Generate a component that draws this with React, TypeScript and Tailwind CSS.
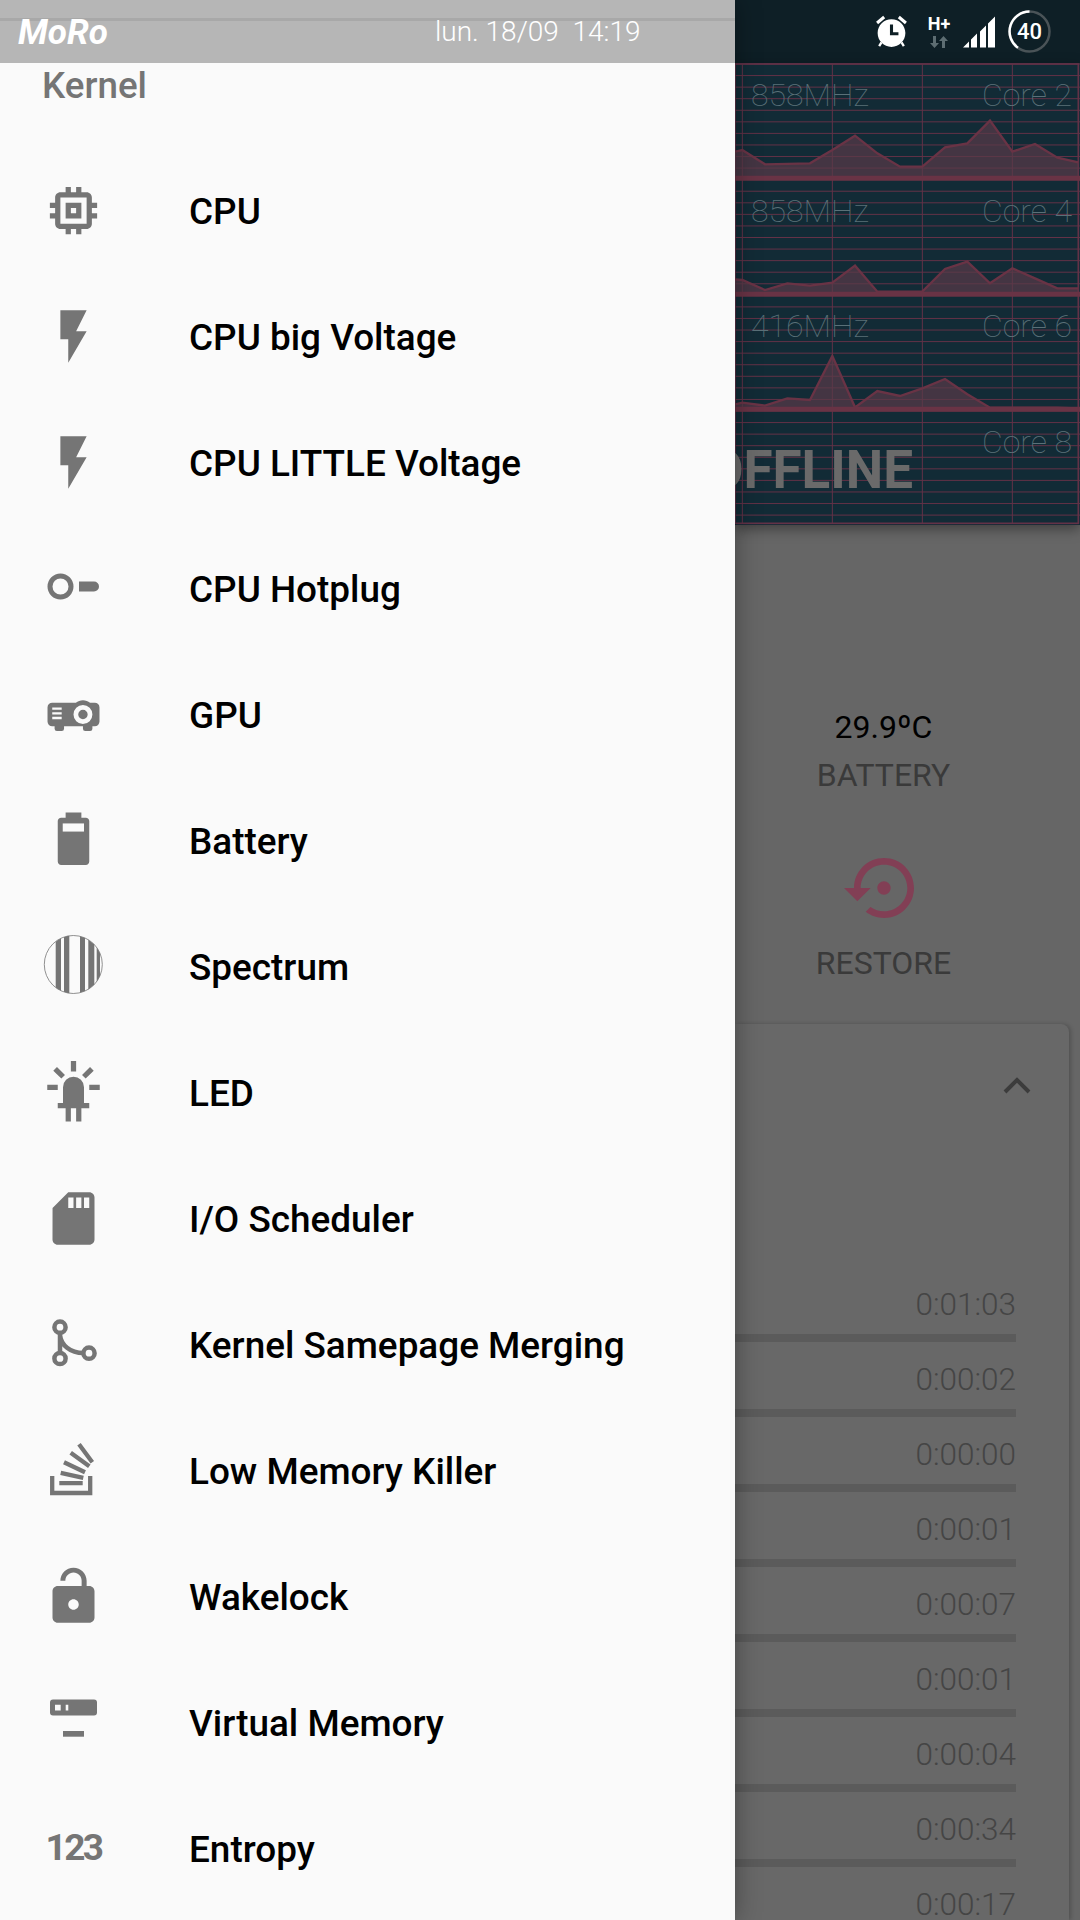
import React from 'react';

const rows = ['0:01:03', '0:00:02', '0:00:00', '0:00:01', '0:00:07', '0:00:01', '0:00:04', '0:00:34', '0:00:17'];

const P: React.FC<{ d: string; className?: string }> = ({ d, className = '' }) => (
  <svg viewBox="0 0 24 24" className={`w-[63px] h-[63px] fill-[#757575] ${className}`}>
    <path fillRule="evenodd" d={d} />
  </svg>
);

const SpectrumIcon = () => (
  <svg viewBox="0 0 63 63" className="w-[63px] h-[63px]">
    <defs>
      <clipPath id="spectrum-clip">
        <circle cx="31.3" cy="29.5" r="29" />
      </clipPath>
    </defs>
    <g clipPath="url(#spectrum-clip)" fill="#757575">
      <rect x="13.7" y="0" width="5.3" height="63" />
      <rect x="22" y="0" width="5.3" height="63" />
      <rect x="38" y="0" width="5" height="63" />
      <rect x="46.3" y="0" width="6" height="63" />
      <rect x="54.7" y="0" width="3.3" height="63" />
    </g>
    <circle cx="31.3" cy="29.5" r="29" fill="none" stroke="#757575" strokeWidth="0.8" />
  </svg>
);

const HotplugIcon = () => (
  <svg viewBox="0 0 63 63" className="w-[63px] h-[63px]">
    <circle cx="18.5" cy="29.5" r="10.5" fill="none" stroke="#757575" strokeWidth="5" />
    <path d="M37 24.5h15a5 5 0 0 1 0 10H37z" fill="#757575" />
  </svg>
);

const BatteryIcon = () => (
  <svg viewBox="0 0 24 24" className="w-[63px] h-[63px]">
    <path
      fill="#757575"
      d="M9 1.300h6v2h1.700c.7 0 1.300.6 1.300 1.300v15.400c0 .7-.6 1.300-1.300 1.300H7.300c-.7 0-1.300-.6-1.300-1.300V4.600c0-.7.6-1.300 1.300-1.300H9z"
    />
    <rect x="7.900" y="5.500" width="8.100" height="3.100" fill="#fafafa" />
  </svg>
);

const MergeIcon = () => (
  <svg viewBox="0 0 63 63" className="w-[63px] h-[63px]" fill="none" stroke="#757575" strokeWidth="4.5">
    <circle cx="18" cy="14.2" r="5.6" />
    <circle cx="18" cy="45.5" r="5.6" />
    <circle cx="47" cy="40.2" r="5.6" />
    <path d="M18 20v20M18 22c1 10 10 18 23.5 18" />
  </svg>
);

const StackIcon = () => (
  <svg viewBox="0 0 63 63" className="w-[63px] h-[63px]" fill="none" stroke="#757575" strokeWidth="4.3">
    <path d="M10.200 37v17h38V37" />
    <path d="M17.300 44.200h23.400M18.700 33.800l22.600 5M22 23.200l21 10M28.700 13.800l18.600 13.400M37 5.200l13.300 18" />
  </svg>
);

const MemoryIcon = () => (
  <svg viewBox="0 0 63 63" className="w-[63px] h-[63px]">
    <path
      fill="#757575"
      fillRule="evenodd"
      d="M11 8.500h41a3 3 0 0 1 3 3v10a3 3 0 0 1-3 3H11a3 3 0 0 1-3-3v-10a3 3 0 0 1 3-3zM13 13.800v5.700h5.700v-5.700zM23.700 13.800v5.700h2.600v-5.700z"
    />
    <rect x="21" y="40" width="21" height="5.700" fill="#757575" />
  </svg>
);

const EntropyIcon = () => (
  <span className="w-[63px] h-[63px] flex items-center justify-center text-[#757575] text-[37px] font-bold tracking-[-2.500px] font-['Roboto',sans-serif]">
    123
  </span>
);

const flash = 'M7 2v11h3v9l7-12h-4l4-8z';

const menu: { label: string; icon: React.ReactNode }[] = [
  {
    label: 'CPU',
    icon: (
      <P d="M15 9H9v6h6V9zm-2 4h-2v-2h2v2zm8-2V9h-2V7c0-1.100-.9-2-2-2h-2V3h-2v2h-2V3H9v2H7c-1.100 0-2 .9-2 2v2H3v2h2v2H3v2h2v2c0 1.100.9 2 2 2h2v2h2v-2h2v2h2v-2h2c1.100 0 2-.9 2-2v-2h2v-2h-2v-2h2zm-4 6H7V7h10v10z" />
    ),
  },
  { label: 'CPU big Voltage', icon: <P d={flash} /> },
  { label: 'CPU LITTLE Voltage', icon: <P d={flash} /> },
  { label: 'CPU Hotplug', icon: <HotplugIcon /> },
  {
    label: 'GPU',
    icon: (
      <P
        className="scale-90"
        d="M16,6C14.870,6 13.840,6.380 13,7H3A2,2 0 0,0 1,9V15A2,2 0 0,0 3,17H4V18A1,1 0 0,0 5,19H7A1,1 0 0,0 8,18V17H16V18A1,1 0 0,0 17,19H19A1,1 0 0,0 20,18V17H21A2,2 0 0,0 23,15V9A2,2 0 0,0 21,7H19C18.160,6.380 17.130,6 16,6M16,8A4,4 0 0,1 20,12A4,4 0 0,1 16,16A4,4 0 0,1 12,12A4,4 0 0,1 16,8M16,10A2,2 0 0,0 14,12A2,2 0 0,0 16,14A2,2 0 0,0 18,12A2,2 0 0,0 16,10M3,9H7V10H3V9M3,11H7V12H3V11M3,13H7V14H3V13Z"
      />
    ),
  },
  { label: 'Battery', icon: <BatteryIcon /> },
  { label: 'Spectrum', icon: <SpectrumIcon /> },
  {
    label: 'LED',
    icon: (
      <P d="M11,0V4H13V0H11M18.300,2.290L15.240,5.290L16.640,6.710L19.700,3.710L18.300,2.290M5.700,2.290L4.300,3.710L7.360,6.710L8.760,5.290L5.700,2.290M12,6A4,4 0 0,0 8,10V16H6V18H9V23H11V18H13V23H15V18H18V16H16V10A4,4 0 0,0 12,6M2,9V11H6V9H2M18,9V11H22V9H18Z" />
    ),
  },
  {
    label: 'I/O Scheduler',
    icon: (
      <P d="M18 2h-8L4.020 8 4 20c0 1.100.9 2 2 2h12c1.100 0 2-.9 2-2V4c0-1.100-.9-2-2-2zm-6 6h-2V4h2v4zm3 0h-2V4h2v4zm3 0h-2V4h2v4z" />
    ),
  },
  { label: 'Kernel Samepage Merging', icon: <MergeIcon /> },
  { label: 'Low Memory Killer', icon: <StackIcon /> },
  {
    label: 'Wakelock',
    icon: (
      <P d="M18 8h-1V6c0-2.760-2.240-5-5-5S7 3.240 7 6h1.900c0-1.710 1.390-3.100 3.100-3.100 1.710 0 3.100 1.390 3.100 3.100v2H6c-1.100 0-2 .9-2 2v10c0 1.100.9 2 2 2h12c1.100 0 2-.9 2-2V10c0-1.100-.9-2-2-2zm-6 9c-1.100 0-2-.9-2-2s.9-2 2-2 2 .9 2 2-.9 2-2 2z" />
    ),
  },
  { label: 'Virtual Memory', icon: <MemoryIcon /> },
  { label: 'Entropy', icon: <EntropyIcon /> },
];

const gridYs = Array.from({ length: 40 }, (_, i) => 12 + i * 34.7);

const cores = [
  {
    base: 355,
    pts: '15,275 37,270 105,313 240,310 307,270 375,227 442,280 510,320 577,320 645,262 712,250 780,182 847,275 915,252 982,293 1045,307',
  },
  {
    base: 703,
    pts: '15,658 37,660 105,690 172,670 240,677 307,668 375,617 442,695 577,695 645,627 712,605 780,670 847,625 915,655 982,685 1045,685',
  },
  {
    base: 1048,
    pts: '15,1033 37,1028 105,1037 172,1015 240,1020 307,888 375,1042 442,993 510,1008 577,985 645,957 712,1003 780,1043 980,1043 1045,1045',
  },
];

const CoreChart = () => (
  <svg viewBox="15 9 1035 1386" className="absolute inset-0 w-full h-full">
    {gridYs.map((y) => (
      <line key={y} x1="15" x2="1050" y1={y} y2={y} stroke="#633247" strokeWidth="3" />
    ))}
    {[37, 307, 577, 847].map((x) => (
      <line key={x} x1={x} x2={x} y1="12" y2="1390" stroke="#633247" strokeWidth="3" />
    ))}
    <rect x="15" y="12" width="1030" height="1378" fill="none" stroke="#633247" strokeWidth="5" />
    {cores.map((c) => (
      <g key={c.base}>
        <polygon points={`15,${c.base} ${c.pts} 1045,${c.base}`} fill="#5a3a48" fillOpacity="0.7" />
        <polyline points={c.pts} fill="none" stroke="#693345" strokeWidth="7" />
        <line x1="15" x2="1050" y1={c.base} y2={c.base} stroke="#693345" strokeWidth="15" />
      </g>
    ))}
  </svg>
);

const coreRows = [
  { mhz: '858MHz', core: 'Core 2' },
  { mhz: '858MHz', core: 'Core 4' },
  { mhz: '416MHz', core: 'Core 6' },
  { mhz: '', core: 'Core 8' },
];

const App: React.FC = () => {
  return (
    <div className="w-[1080px] h-[1920px] flex overflow-hidden font-['Roboto',sans-serif]">
      <aside className="relative z-10 w-[735px] h-full flex flex-col bg-[#fafafa] shadow-[0_0_24px_rgba(0,0,0,0.35)]">
        <div className="relative h-[63px] shrink-0 bg-[#b6b6b6] text-white">
          <div className="absolute left-0 right-0 top-[18px] h-[3px] bg-[#a8a8a8]" />
          <div className="relative h-full flex items-center pt-[2px]">
            <span className="ml-[18px] text-[35px] font-bold italic leading-none">MoRo</span>
            <span className="absolute left-[435px] top-[18px] text-[28px] font-light leading-none whitespace-pre">lun. 18/09  14:19</span>
          </div>
        </div>
        <div className="h-[84px] shrink-0 pl-[42px] pt-[1px] text-[36.75px] leading-[44px] font-medium text-[#757575]">Kernel</div>
        {menu.map((m) => (
          <div key={m.label} className="h-[126px] shrink-0 flex items-center pl-[42px]">
            <div className="w-[63px] h-[63px] shrink-0">{m.icon}</div>
            <span className="ml-[84px] pt-[4px] text-[36.9px] font-medium text-black leading-none">{m.label}</span>
          </div>
        ))}
      </aside>

      <main className="flex-1 min-w-0 h-full flex flex-col bg-[#5f5f5f]">
        <div className="h-[63px] shrink-0 flex items-center pl-[138px] bg-[#0e1f26]">
          <svg viewBox="0 0 24 24" className="w-[37px] h-[37px] fill-white shrink-0">
            <path d="M22 5.720l-4.600-3.860-1.290 1.530 4.600 3.860L22 5.720zM7.880 3.390L6.600 1.860 2 5.710l1.290 1.530 4.590-3.850zM12 4c-4.970 0-9 4.030-9 9s4.030 9 9 9c4.970 0 9-4.030 9-9s-4.030-9-9-9z" />
            <path d="M5.500 19l-1.500 2.500M18.500 19l1.500 2.500" stroke="#ffffff" strokeWidth="1.500" />
            <path d="M12 7.500v6h4.500" fill="none" stroke="#0e1f26" strokeWidth="2" />
          </svg>
          <div className="ml-[18px] w-[22px] shrink-0 flex flex-col items-center">
            <span className="text-[18px] font-bold leading-[16px] text-white">H+</span>
            <svg viewBox="0 0 20 12" className="w-[20px] h-[12px] mt-[4px] fill-[#5d6d72]">
              <path d="M4 0h3v7h3l-4.500 5L1 7h3zM13 12h3V5h3l-4.500-5L10 5h3z" />
            </svg>
          </div>
          <svg viewBox="0 0 32 32" className="ml-[13px] w-[32px] h-[32px] fill-white shrink-0">
            <path d="M0 31.500L6 25.500V31.500ZM8 23.500l6-6v14H8ZM17 15.500l6-6v22h-6ZM25 7.500l7-7v31h-7Z" />
          </svg>
          <div className="relative ml-[13px] w-[43px] h-[43px] shrink-0 flex items-center justify-center">
            <svg viewBox="0 0 43 43" className="absolute inset-0 w-full h-full" fill="none" strokeWidth="2.500">
              <circle cx="21.500" cy="21.500" r="20" stroke="#4a5357" />
              <path d="M21.500 1.500A20 20 0 0 0 10 37.800" stroke="#ffffff" />
            </svg>
            <span className="text-[22px] font-medium text-white leading-none">40</span>
          </div>
        </div>

        <div className="relative h-[462px] shrink-0 overflow-hidden bg-[#122b36] shadow-[0_4px_12px_rgba(0,0,0,0.4)]">
          <CoreChart />
          <div className="relative h-full flex flex-col pt-[10px]">
            {coreRows.map((r) => (
              <div key={r.core} className="h-[115.500px] shrink-0 flex justify-between pl-[16px] pr-[8px] text-[32px] font-thin leading-[44px] text-[#5a7078]">
                <span>{r.mhz}</span>
                <span>{r.core}</span>
              </div>
            ))}
          </div>
          <span className="absolute right-[167px] top-[377px] text-[53px] leading-[60px] font-bold text-[#6a6a6a] whitespace-nowrap">OFFLINE</span>
        </div>

        <div className="flex-1 min-h-0 flex flex-col bg-[#666666]">
          <div className="pr-[48px] pt-[181px] flex flex-col items-center">
            <span className="text-[32px] leading-[42px] text-black">29.9ºC</span>
            <span className="text-[32px] leading-[42px] mt-[6px] text-[#3a3a3a]">BATTERY</span>
            <svg viewBox="0 0 24 24" className="w-[80px] h-[80px] mt-[52px] fill-[#823f55]">
              <path d="M14 12c0-1.100-.9-2-2-2s-2 .9-2 2 .9 2 2 2 2-.9 2-2zm-2-9c-4.970 0-9 4.030-9 9H0l4 4 4-4H5c0-3.870 3.130-7 7-7s7 3.130 7 7-3.130 7-7 7c-1.510 0-2.910-.49-4.060-1.300l-1.420 1.440C8.040 20.300 9.940 21 12 21c4.970 0 9-4.030 9-9s-4.030-9-9-9z" />
            </svg>
            <span className="text-[32px] leading-[42px] mt-[14px] text-[#3a3a3a]">RESTORE</span>
          </div>

          <div className="mt-[40px] mr-[11px] flex-1 min-h-0 overflow-hidden rounded-tr-[8px] bg-[#686868] shadow-[2px_0_4px_rgba(0,0,0,0.2)]">
            <div className="h-[124px] flex items-center justify-end pr-[38px] pb-[2px]">
              <svg viewBox="0 0 28 18" className="w-[28px] h-[18px]" fill="none" stroke="#3c3c3c" strokeWidth="4">
                <path d="M2 16L14 4l12 12" />
              </svg>
            </div>
            <div className="pt-[135px] pr-[53px]">
              {rows.map((t, i) => (
                <div key={i} className="h-[75px] flex flex-col items-end">
                  <span className="text-[31.500px] leading-[44px] font-light text-[#454545]">{t}</span>
                  <div className="w-full h-[8px] mt-[7px] bg-[#5b5b5b]" />
                </div>
              ))}
            </div>
          </div>
        </div>
      </main>
    </div>
  );
};

export default App;
